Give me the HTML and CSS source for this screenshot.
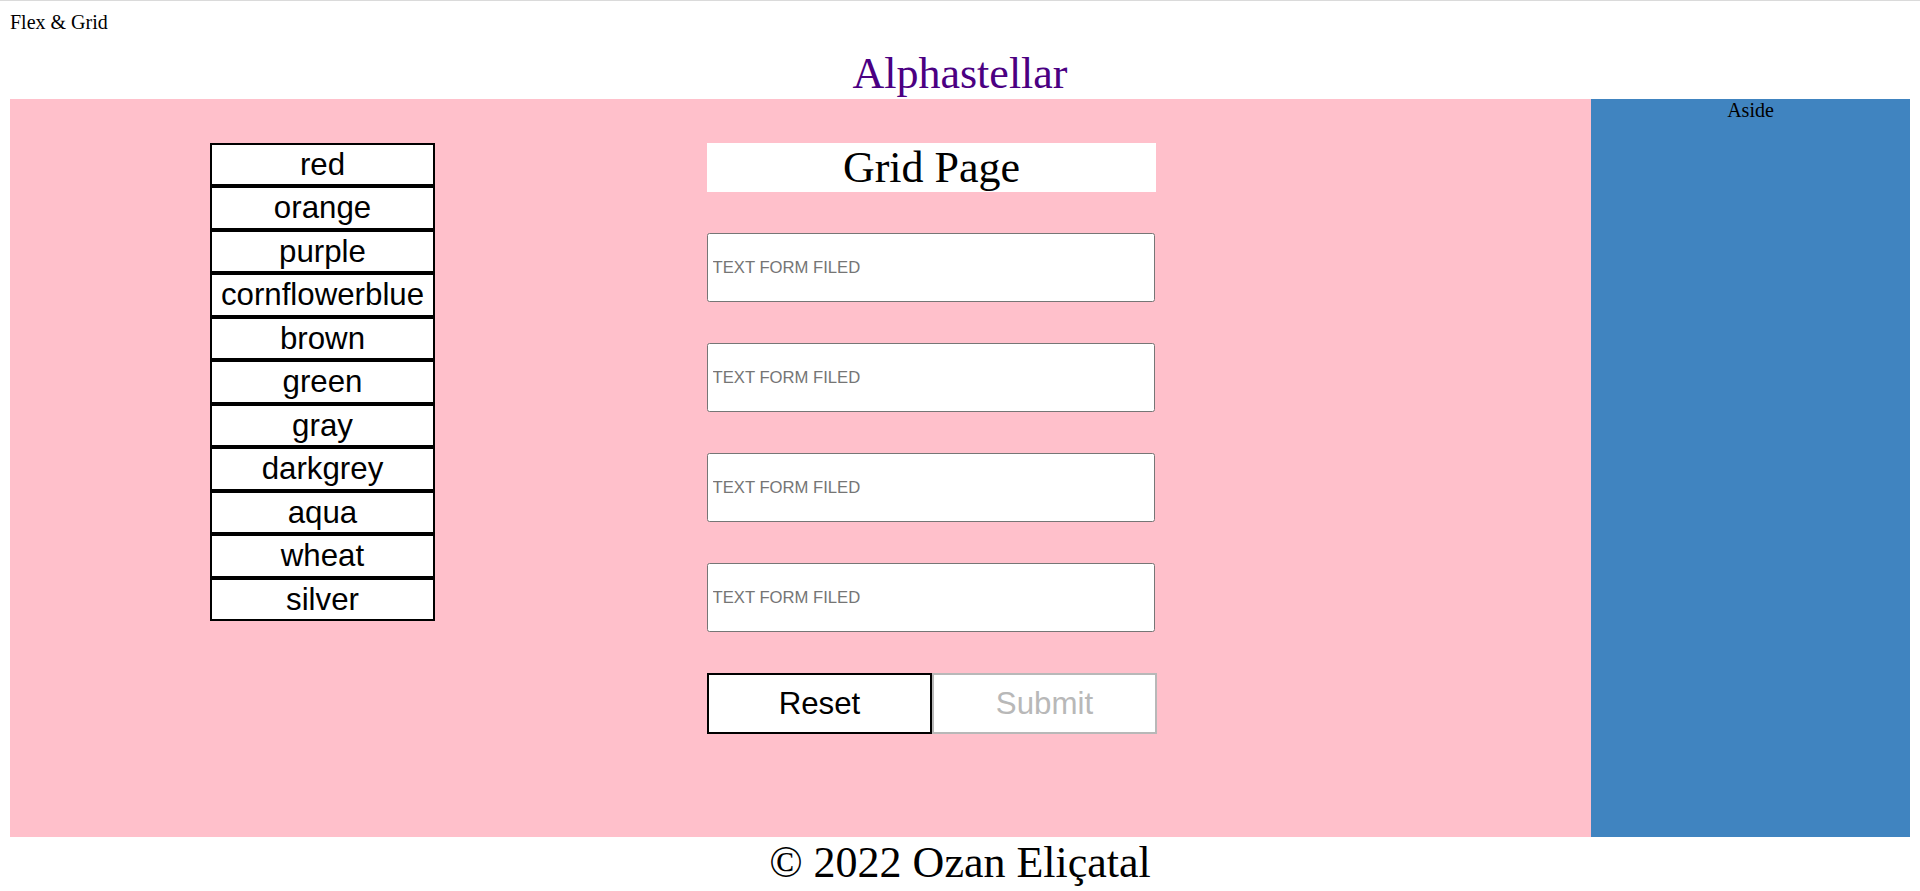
FILE: index.html
```html
<!DOCTYPE html>
<html lang="en">
<head>
<meta charset="utf-8">
<title>Flex &amp; Grid</title>
<link rel="stylesheet" href="styles.css">
</head>
<body>
<div class="site-title">Flex &amp; Grid</div>
<h1 class="brand">Alphastellar</h1>
<div class="layout">
  <main class="main">
    <ul class="colors">
      <li class="color">red</li>
      <li class="color">orange</li>
      <li class="color">purple</li>
      <li class="color">cornflowerblue</li>
      <li class="color">brown</li>
      <li class="color">green</li>
      <li class="color">gray</li>
      <li class="color">darkgrey</li>
      <li class="color">aqua</li>
      <li class="color">wheat</li>
      <li class="color">silver</li>
    </ul>
    <form class="form">
      <h2 class="form-title">Grid Page</h2>
      <input class="field" type="text" placeholder="TEXT FORM FILED">
      <input class="field" type="text" placeholder="TEXT FORM FILED">
      <input class="field" type="text" placeholder="TEXT FORM FILED">
      <input class="field" type="text" placeholder="TEXT FORM FILED">
      <div class="actions">
        <button class="btn btn-reset" type="reset">Reset</button>
        <button class="btn btn-submit" type="submit" disabled>Submit</button>
      </div>
    </form>
  </main>
  <aside class="aside">Aside</aside>
</div>
<footer class="footer">© 2022 Ozan Eliçatal</footer>
</body>
</html>
```
FILE: styles.css
```css
html {
  border-top: 1px solid #dadada;
}
body {
  margin: 10px;
  font-family: "Liberation Serif", "Times New Roman", serif;
  font-size: 20px;
  color: #000;
  background: #fff;
}
.site-title {
  line-height: 23px;
}
.brand {
  margin: 14px 0 0;
  font-size: 44px;
  font-weight: normal;
  line-height: 51px;
  text-align: center;
  color: #4b0082;
}
.layout {
  display: grid;
  grid-template-columns: 1581px 1fr;
  height: 738px;
}
.main {
  background: #ffc0cb;
  display: flex;
  align-items: flex-start;
  padding: 44px 0 0 200px;
}
.colors {
  list-style: none;
  margin: 0;
  padding: 0;
  width: 225px;
}
.color {
  box-sizing: border-box;
  border: 2px solid #000;
  background: #fff;
  text-align: center;
  font-family: "Liberation Sans", Arial, sans-serif;
  font-size: 31.25px;
  line-height: 39.45px;
}
.form {
  margin-left: 272px;
  width: 450px;
  display: flex;
  flex-direction: column;
  align-items: flex-start;
  gap: 41px;
}
.form-title {
  margin: 0;
  width: 449px;
  height: 49px;
  background: #fff;
  font-size: 44px;
  font-weight: normal;
  line-height: 49px;
  text-align: center;
}
.field {
  box-sizing: border-box;
  width: 448px;
  height: 69px;
  margin: 0;
  padding: 0 4.5px;
  border: 1px solid #767676;
  border-radius: 2.5px;
  background: #fff;
  font-family: "Liberation Sans", Arial, sans-serif;
  font-size: 16.67px;
}
.field::placeholder {
  color: #757575;
}
.actions {
  display: flex;
  width: 450px;
}
.btn {
  box-sizing: border-box;
  width: 225px;
  height: 61px;
  margin: 0;
  padding: 0;
  background: #fff;
  font-family: "Liberation Sans", Arial, sans-serif;
  font-size: 31.25px;
}
.btn-reset {
  border: 2px solid #000;
  color: #000;
}
.btn-submit {
  border: 2px solid #b8b8b8;
  color: #b8b8b8;
}
.aside {
  background: #4084c0;
  text-align: center;
  line-height: 23px;
}
.footer {
  text-align: center;
  font-size: 44px;
}
```
